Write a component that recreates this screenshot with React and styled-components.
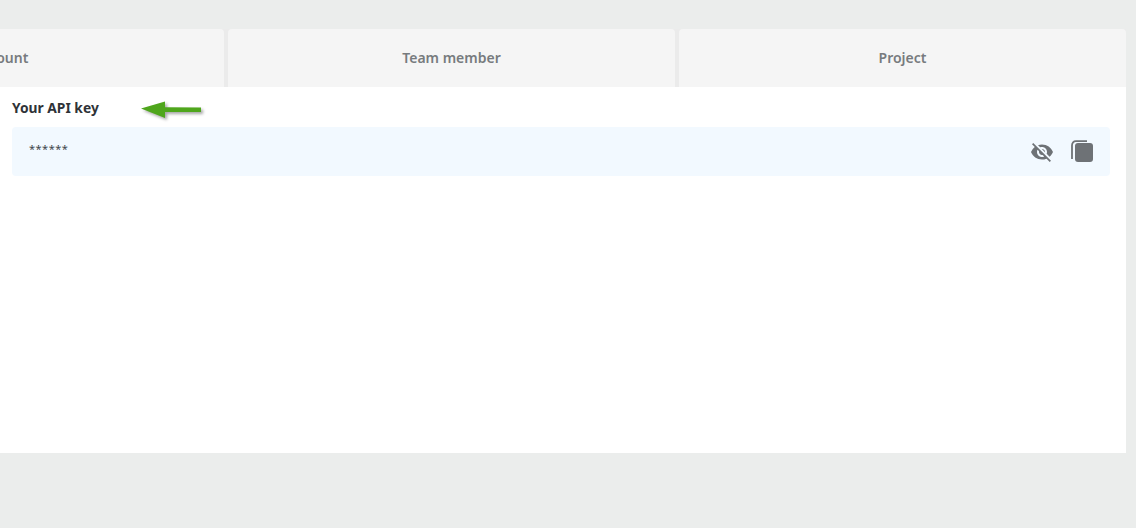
import React from 'react';
import styled, { createGlobalStyle } from 'styled-components';
import { MdVisibilityOff } from 'react-icons/md';

const GlobalStyle = createGlobalStyle`
	html, body {
		margin: 0;
		height: 100%;
		overflow: hidden;
		background: #ebedec;
		font-family: "Noto Sans", "Open Sans", sans-serif;
	}
`;

const Page = styled.div`
	width: 1349px;
	margin: 29px 0 0 -223px;
`;

const Tabs = styled.div`
	display: grid;
	grid-template-columns: repeat(3, 447px);
	column-gap: 4px;
	background: #ebebeb;
`;

const Tab = styled.div`
	height: 58px;
	padding-bottom: 2px;
	box-sizing: border-box;
	display: flex;
	align-items: center;
	justify-content: center;
	background: #f5f5f5;
	border-radius: 4px 4px 0 0;
	color: #777b7e;
	font-size: 14px;
	font-weight: 600;
`;

const Panel = styled.div`
	height: 366px;
	box-sizing: border-box;
	padding: 11px 16px 0 235px;
	background: #fff;
`;

const Heading = styled.div`
	position: relative;
	height: 29px;
	line-height: 19px;
	color: #2f3338;
	font-size: 13.8px;
	font-weight: 700;
`;

const Arrow = styled.svg`
	position: absolute;
	left: 127px;
	top: 0;
	filter: drop-shadow(2px 2px 1.5px rgba(0, 0, 0, 0.35));
`;

const KeyRow = styled.div`
	height: 49px;
	box-sizing: border-box;
	padding: 0 17px;
	display: flex;
	align-items: center;
	justify-content: space-between;
	background: #f2f9ff;
	border-radius: 4px;
`;

const KeyText = styled.span`
	margin-bottom: 7px;
	color: #41464b;
	font-size: 11px;
	letter-spacing: 0.5px;
`;

const Actions = styled.div`
	display: flex;
	align-items: center;
	gap: 15px;
	color: #6e7276;
`;

const CopyIcon = () => (
	<svg width="24" height="24" viewBox="0 0 24 24">
		<path
			d="M3 19V5.5C3 2.8 4.5 1.2 7 1.2H18"
			fill="none"
			stroke="currentColor"
			strokeWidth="1.8"
		/>
		<rect x="5" y="2" width="19" height="20.5" rx="3.5" fill="#f2f9ff" />
		<rect x="6" y="3" width="18" height="19" rx="3" fill="currentColor" />
	</svg>
);

export default function App() {
	return (
		<>
			<GlobalStyle />
			<Page>
				<Tabs>
					<Tab>Account</Tab>
					<Tab>Team member</Tab>
					<Tab>Project</Tab>
				</Tabs>
				<Panel>
					<Heading>
						Your API key
						<Arrow width="68" height="26" viewBox="0 0 68 26">
							<path d="M2 10.5 L26 3.5 L26 9.3 L62 9.5 L62 14 L26 14 L26 20 Z" fill="#4fa61c" />
						</Arrow>
					</Heading>
					<KeyRow>
						<KeyText>******</KeyText>
						<Actions>
							<MdVisibilityOff size={24} />
							<CopyIcon />
						</Actions>
					</KeyRow>
				</Panel>
			</Page>
		</>
	);
}
